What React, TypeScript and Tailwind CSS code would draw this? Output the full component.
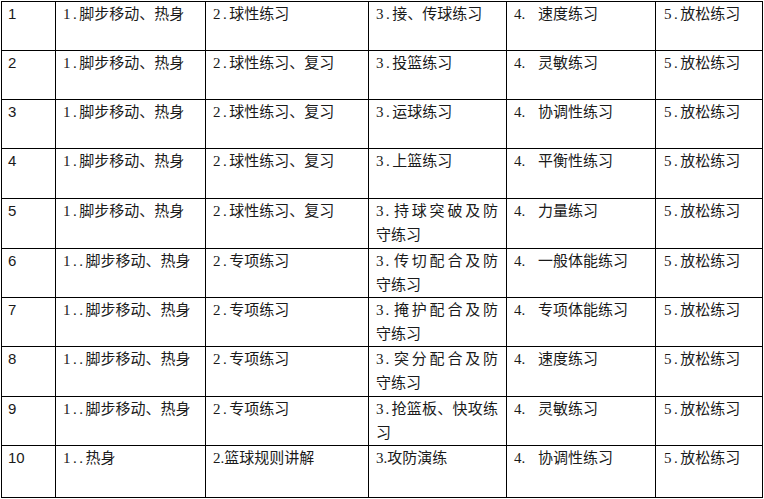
import React from "react";

type Cell = { p: string; t: string; tight?: boolean; gap?: boolean; lines?: [string, string] };

const rows: { h: string; cells: Cell[] }[] = [
  { h: "h-[48.5px]", cells: [
    { p: "1.", t: "脚步移动、热身" }, { p: "2.", t: "球性练习" }, { p: "3.", t: "接、传球练习" }, { p: "4.", t: "速度练习", gap: true }, { p: "5.", t: "放松练习" } ] },
  { h: "h-[49.5px]", cells: [
    { p: "1.", t: "脚步移动、热身" }, { p: "2.", t: "球性练习、复习" }, { p: "3.", t: "投篮练习" }, { p: "4.", t: "灵敏练习", gap: true }, { p: "5.", t: "放松练习" } ] },
  { h: "h-[49px]", cells: [
    { p: "1.", t: "脚步移动、热身" }, { p: "2.", t: "球性练习、复习" }, { p: "3.", t: "运球练习" }, { p: "4.", t: "协调性练习", gap: true }, { p: "5.", t: "放松练习" } ] },
  { h: "h-[50px]", cells: [
    { p: "1.", t: "脚步移动、热身" }, { p: "2.", t: "球性练习、复习" }, { p: "3.", t: "上篮练习" }, { p: "4.", t: "平衡性练习", gap: true }, { p: "5.", t: "放松练习" } ] },
  { h: "h-[50px]", cells: [
    { p: "1.", t: "脚步移动、热身" }, { p: "2.", t: "球性练习、复习" }, { p: "3.", t: "", lines: ["持球突破及防", "守练习"] }, { p: "4.", t: "力量练习", gap: true }, { p: "5.", t: "放松练习" } ] },
  { h: "h-[49px]", cells: [
    { p: "1..", t: "脚步移动、热身" }, { p: "2.", t: "专项练习" }, { p: "3.", t: "", lines: ["传切配合及防", "守练习"] }, { p: "4.", t: "一般体能练习", gap: true }, { p: "5.", t: "放松练习" } ] },
  { h: "h-[49px]", cells: [
    { p: "1..", t: "脚步移动、热身" }, { p: "2.", t: "专项练习" }, { p: "3.", t: "", lines: ["掩护配合及防", "守练习"] }, { p: "4.", t: "专项体能练习", gap: true }, { p: "5.", t: "放松练习" } ] },
  { h: "h-[50px]", cells: [
    { p: "1..", t: "脚步移动、热身" }, { p: "2.", t: "专项练习" }, { p: "3.", t: "", lines: ["突分配合及防", "守练习"] }, { p: "4.", t: "速度练习", gap: true }, { p: "5.", t: "放松练习" } ] },
  { h: "h-[49px]", cells: [
    { p: "1..", t: "脚步移动、热身" }, { p: "2.", t: "专项练习" }, { p: "3.", t: "", lines: ["抢篮板、快攻练", "习"] }, { p: "4.", t: "灵敏练习", gap: true }, { p: "5.", t: "放松练习" } ] },
  { h: "h-[52px]", cells: [
    { p: "1..", t: "热身" }, { p: "2.", t: "篮球规则讲解", tight: true }, { p: "3.", t: "攻防演练", tight: true }, { p: "4.", t: "协调性练习", gap: true }, { p: "5.", t: "放松练习" } ] },
];

function Content({ c }: { c: Cell }) {
  if (c.lines) {
    return (
      <div className="w-[122px]">
        <div className="whitespace-nowrap text-justify [text-align-last:justify]">
          <span className="tracking-[2px]">{c.p}</span>
          {c.lines[0]}
        </div>
        <div>{c.lines[1]}</div>
      </div>
    );
  }
  if (c.gap) {
    return (
      <div className="whitespace-nowrap">
        <span className="inline-block w-[24px]">{c.p}</span>
        {c.t}
      </div>
    );
  }
  return (
    <div className="whitespace-nowrap">
      <span className={c.tight ? "" : "tracking-[2.5px]"}>{c.p}</span>
      {c.t}
    </div>
  );
}

export default function App() {
  return (
    <div className="w-[764px] h-[499px] bg-white overflow-hidden pt-px pl-px">
      <table
        className="table-fixed border-collapse text-[15px] leading-[24px] text-[#1a1a1a]"
        style={{ fontFamily: '"Liberation Serif", "Noto Sans CJK SC", serif' }}
      >
        <colgroup>
          <col className="w-[54px]" />
          <col className="w-[150px]" />
          <col className="w-[163px]" />
          <col className="w-[138px]" />
          <col className="w-[149px]" />
          <col className="w-[107px]" />
        </colgroup>
        <tbody>
          {rows.map((r, i) => (
            <tr key={i} className={r.h}>
              <td className="border border-black align-top pl-[6px] pt-0 font-['Liberation_Sans']">
                {i + 1}
              </td>
              {r.cells.map((c, j) => (
                <td key={j} className={`border border-black align-top pt-0 ${j === 4 ? "pl-[8px]" : "pl-[7px]"}`}>
                  <Content c={c} />
                </td>
              ))}
            </tr>
          ))}
        </tbody>
      </table>
    </div>
  );
}
